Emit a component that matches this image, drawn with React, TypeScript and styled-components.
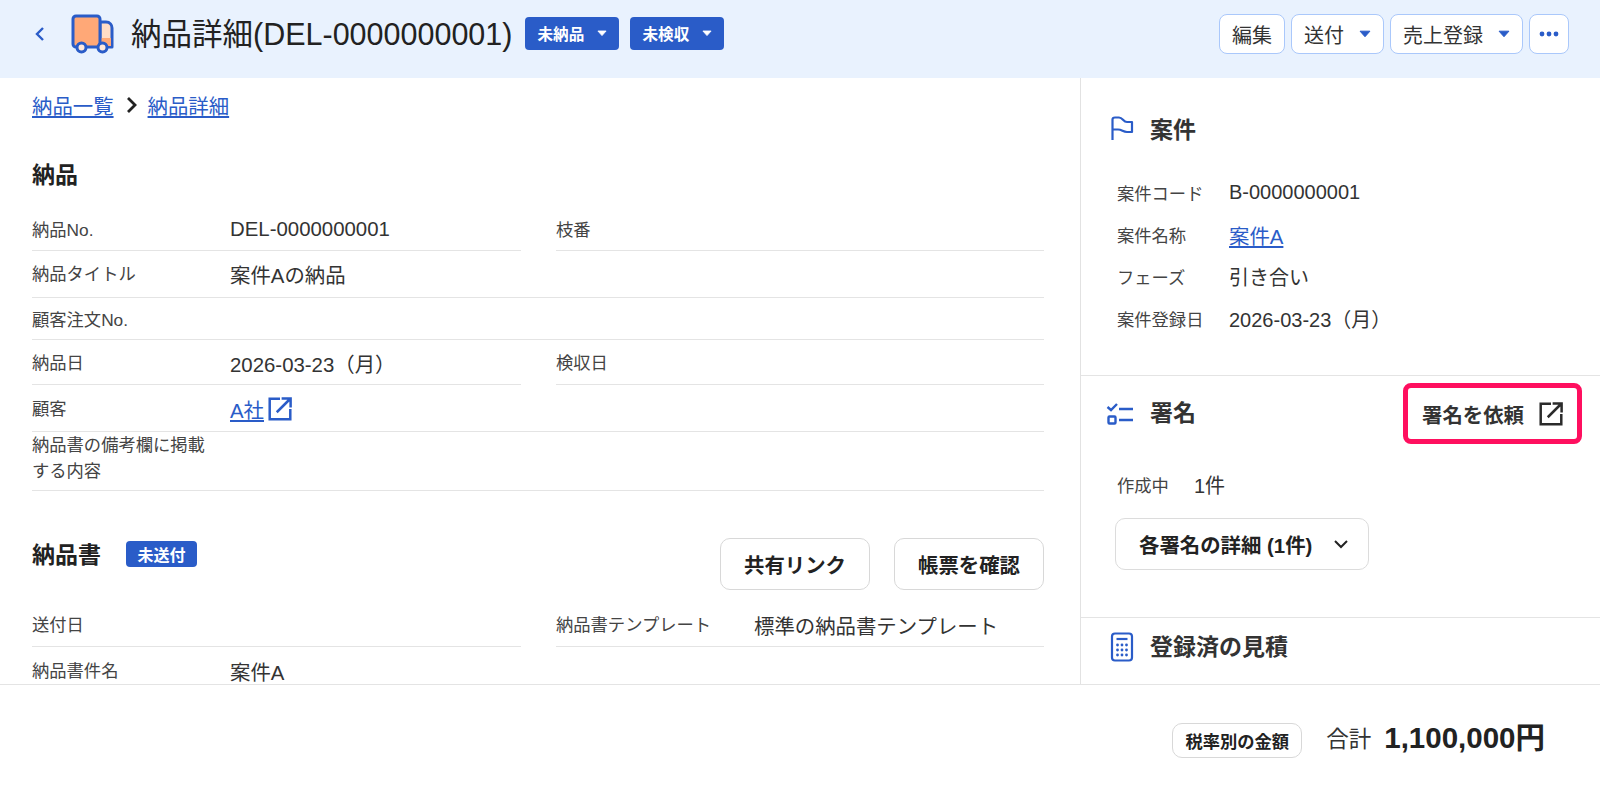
import React from 'react'
import styled, { createGlobalStyle } from 'styled-components'

const Global = createGlobalStyle`
html, body {
  margin: 0;
  padding: 0;
  background: #fff;
}
* {
  box-sizing: border-box;
}
body {
  font-family: "Liberation Sans", "Noto Sans CJK JP", sans-serif;
  color: #2b2b2b;
}
`

const Caret: React.FC<{ color?: string; size?: number }> = ({ color = '#2a5cc8', size = 12 }) => (
  <svg width={size} height={size * 0.66} viewBox="0 0 12 8">
    <path d="M1 1.2h10L6 6.8z" fill={color} stroke={color} strokeWidth="1" strokeLinejoin="round" />
  </svg>
)

const Truck = () => (
  <svg width="44" height="40" viewBox="0 0 44 40">
    <path d="M30 8h6c4 0 6 3 6 6v19H30z" fill="#ffdcc6" stroke="#2a5cc8" strokeWidth="3" strokeLinejoin="round" />
    <path d="M31 24h10v8H31z" fill="#ffa877" />
    <rect x="3" y="2" width="27" height="31" rx="3" fill="#ffa877" stroke="#2a5cc8" strokeWidth="3" />
    <circle cx="11.5" cy="33.5" r="4.5" fill="#ffe9dc" stroke="#2a5cc8" strokeWidth="3" />
    <circle cx="32.5" cy="33.5" r="4.5" fill="#ffe9dc" stroke="#2a5cc8" strokeWidth="3" />
  </svg>
)

const External: React.FC<{ color: string }> = ({ color }) => (
  <svg width="26" height="26" viewBox="0 0 24 24" fill="none" stroke={color} strokeWidth="2.3">
    <path d="M12 2.5H2.5v19h19V12" />
    <path d="M9 15 21 3M13.5 2.2h8.3v8.3" />
  </svg>
)

const Flag = () => (
  <svg width="26" height="28" viewBox="0 0 26 28" fill="none" stroke="#2a5cc8" strokeWidth="2.2" strokeLinejoin="round">
    <path d="M3.5 26V5.5C3.5 4.5 4.5 3.5 6 3.5H10C14 3.5 14 8 18 8H23V18H18C14 18 13 15.5 9 15.5H3.5" />
  </svg>
)

const Checks = () => (
  <ChecksSvg width="28" height="24" viewBox="0 0 28 24" fill="none" stroke="#2a5cc8" strokeWidth="2.4">
    <path d="M1.5 4l3.5 3 6-6M13 6h14M13 17h14" />
    <rect x="2.5" y="13.5" width="7" height="7" rx="1" />
  </ChecksSvg>
)

const Calculator = () => (
  <CalcSvg width="24" height="30" viewBox="0 0 24 30" fill="none" stroke="#2a5cc8" strokeWidth="2.2">
    <rect x="2" y="1.5" width="20" height="27" rx="3" />
    <path d="M6.5 7h11" />
    <g fill="#2a5cc8" stroke="none">
      <circle cx="7.5" cy="13" r="1.4" />
      <circle cx="12" cy="13" r="1.4" />
      <circle cx="16.5" cy="13" r="1.4" />
      <circle cx="7.5" cy="18" r="1.4" />
      <circle cx="12" cy="18" r="1.4" />
      <circle cx="16.5" cy="18" r="1.4" />
      <circle cx="7.5" cy="23" r="1.4" />
      <circle cx="12" cy="23" r="1.4" />
      <circle cx="16.5" cy="23" r="1.4" />
    </g>
  </CalcSvg>
)

const Field: React.FC<{ label: string; children?: React.ReactNode }> = ({ label, children }) => (
  <Cell>
    <Label>{label}</Label>
    <Value>{children}</Value>
  </Cell>
)

const Side: React.FC<{ label: string; children: React.ReactNode }> = ({ label, children }) => (
  <SideRow>
    <SideLabel>{label}</SideLabel>
    <SideValue>{children}</SideValue>
  </SideRow>
)

export default function App() {
  return (
    <Page>
      <Global />
      <Header>
        <HeaderLeft>
          <Back>
            <svg width="12" height="16" viewBox="0 0 12 16" fill="none" stroke="#2a5cc8" strokeWidth="2.4">
              <path d="M9 2 3 8l6 6" />
            </svg>
          </Back>
          <Truck />
          <PageTitle>納品詳細(DEL-0000000001)</PageTitle>
          <Status>未納品<Caret color="#fff" size={10} /></Status>
          <Status>未検収<Caret color="#fff" size={10} /></Status>
        </HeaderLeft>
        <HeaderRight>
          <HeadButton>編集</HeadButton>
          <HeadButton>送付<Caret /></HeadButton>
          <HeadButton>売上登録<Caret /></HeadButton>
          <MoreButton>
            <svg width="20" height="6" viewBox="0 0 20 6" fill="#2a5cc8">
              <circle cx="3" cy="3" r="2.4" />
              <circle cx="10" cy="3" r="2.4" />
              <circle cx="17" cy="3" r="2.4" />
            </svg>
          </MoreButton>
        </HeaderRight>
      </Header>
      <Body>
        <Main>
          <Crumbs>
            <Link>納品一覧</Link>
            <svg width="14" height="18" viewBox="0 0 14 18" fill="none" stroke="#222" strokeWidth="2.8">
              <path d="M4 2l7 7-7 7" />
            </svg>
            <Link>納品詳細</Link>
          </Crumbs>
          <SectionTitle>納品</SectionTitle>
          <Row $h={46} $top={4}>
            <Field label="納品No.">DEL-0000000001</Field>
            <Field label="枝番" />
          </Row>
          <Row $h={47} $full>
            <Field label="納品タイトル">案件Aの納品</Field>
          </Row>
          <Row $h={42} $full $top={2}>
            <Field label="顧客注文No." />
          </Row>
          <Row $h={45} $top={2}>
            <Field label="納品日">2026-03-23（月）</Field>
            <Field label="検収日" />
          </Row>
          <Row $h={47} $full $top={2}>
            <Field label="顧客">
              <ValueLink><Link>A社</Link><External color="#2a5cc8" /></ValueLink>
            </Field>
          </Row>
          <Row $h={59} $full>
            <NoteCell>
              <Label>納品書の備考欄に掲載する内容</Label>
            </NoteCell>
          </Row>
          <InvoiceHead>
            <InvoiceTitle>
              <SectionName>納品書</SectionName>
              <Tag>未送付</Tag>
            </InvoiceTitle>
            <InvoiceActions>
              <OutlineButton>共有リンク</OutlineButton>
              <OutlineButton>帳票を確認</OutlineButton>
            </InvoiceActions>
          </InvoiceHead>
          <Row $h={56} $top={12}>
            <Field label="送付日" />
            <Field label="納品書テンプレート">標準の納品書テンプレート</Field>
          </Row>
          <Row $h={46} $top={2}>
            <Field label="納品書件名">案件A</Field>
            <Cell />
          </Row>
        </Main>
        <Aside>
          <Panel $h={298}>
            <PanelHead>
              <PanelIcon><Flag /></PanelIcon>
              <PanelTitle>案件</PanelTitle>
            </PanelHead>
            <SideList>
              <Side label="案件コード">B-0000000001</Side>
              <Side label="案件名称"><Link>案件A</Link></Side>
              <Side label="フェーズ">引き合い</Side>
              <Side label="案件登録日">2026-03-23（月）</Side>
            </SideList>
          </Panel>
          <Panel $h={242}>
            <SignHead>
              <PanelHead>
                <PanelIcon><Checks /></PanelIcon>
                <PanelTitle>署名</PanelTitle>
              </PanelHead>
              <RequestButton>
                署名を依頼
                <External color="#2b2b2b" />
              </RequestButton>
            </SignHead>
            <Count>
              <SideLabel>作成中</SideLabel>
              <SideValue>1件</SideValue>
            </Count>
            <DetailButton>
              各署名の詳細 (1件)
              <svg width="16" height="10" viewBox="0 0 16 10" fill="none" stroke="#222" strokeWidth="2">
                <path d="M2 2l6 6 6-6" />
              </svg>
            </DetailButton>
          </Panel>
          <EstimatePanel>
            <PanelIcon><Calculator /></PanelIcon>
            <PanelTitle>登録済の見積</PanelTitle>
          </EstimatePanel>
        </Aside>
      </Body>
      <Footer>
        <TaxButton>税率別の金額</TaxButton>
        <TotalLabel>合計</TotalLabel>
        <TotalValue>1,100,000円</TotalValue>
      </Footer>
    </Page>
  )
}

const Page = styled.div`
width:1600px;
height:786px;
display:flex;
flex-direction:column;
overflow:hidden;
`
const Header = styled.header`
height:78px;
background:#e9f2fe;
display:flex;
align-items:center;
justify-content:space-between;
padding:0 31px 10px 34px;
flex:none;
`
const HeaderLeft = styled.div`
display:flex;
align-items:center;
`
const Back = styled.span`
display:flex;
width:36px;
`
const PageTitle = styled.h1`
font-size:30.5px;
font-weight:400;
margin:0 13px 4px 17px;
color:#222;
white-space:nowrap;
`
const Status = styled.span`
height:33px;
width:94px;
margin:0 11px 2px 0;
padding:0 12px;
border-radius:4px;
background:#2a5cc8;
color:#fff;
font-size:15.6px;
font-weight:700;
display:flex;
align-items:center;
justify-content:space-between;
`
const HeaderRight = styled.div`
display:flex;
gap:6px;
`
const HeadButton = styled.button`
height:40px;
padding:0 12px;
gap:15px;
background:#fff;
border:1.5px solid #aac8fb;
border-radius:8px;
color:#333;
font:inherit;
font-size:20px;
display:flex;
align-items:center;
`
const MoreButton = styled(HeadButton)`
width:40px;
padding:0;
justify-content:center;
`
const Body = styled.div`
flex:1;
min-height:0;
display:flex;
`
const Main = styled.main`
width:1081px;
flex:none;
padding:0 36px 0 32px;
border-right:1px solid #e2e2e2;
overflow:hidden;
`
const Crumbs = styled.nav`
height:54px;
display:flex;
align-items:center;
gap:10px;
`
const Link = styled.a`
color:#2a5cc8;
text-decoration:underline;
font-size:20.4px;
`
const SectionTitle = styled.h2`
font-size:23px;
line-height:32px;
font-weight:700;
margin:0;
height:73px;
padding-top:27px;
color:#222;
`
const Row = styled.div<{ $h: number; $full?: boolean; $top?: number }>`
height:${p => p.$h}px;
padding-top:${p => p.$top || 0}px;
display:grid;
grid-template-columns:${p => p.$full ? '1fr' : '489px 488px'};
column-gap:35px;
`
const Cell = styled.div`
display:flex;
align-items:center;
border-bottom:1px solid #e4e4e4;
`
const Label = styled.span`
width:198px;
padding-right:15px;
flex:none;
font-size:17.3px;
line-height:26px;
color:#444;
`
const NoteCell = styled(Cell)`
padding-bottom:6px;
`
const Value = styled.span`
font-size:20.4px;
color:#333;
`
const ValueLink = styled.span`
display:flex;
align-items:center;
gap:3px;
`
const InvoiceHead = styled.div`
height:100px;
padding-top:47px;
display:flex;
align-items:flex-start;
justify-content:space-between;
`
const InvoiceTitle = styled.div`
display:flex;
align-items:center;
gap:25px;
height:32px;
`
const SectionName = styled.h2`
font-size:23px;
font-weight:700;
margin:0 0 3px;
color:#222;
`
const Tag = styled.span`
height:26px;
width:71px;
border-radius:4px;
background:#2a5cc8;
color:#fff;
font-size:16px;
font-weight:700;
display:flex;
align-items:center;
justify-content:center;
`
const InvoiceActions = styled.div`
display:flex;
gap:24px;
`
const OutlineButton = styled.button`
height:52px;
width:150px;
background:#fff;
border:1px solid #d8d8d8;
border-radius:10px;
color:#222;
font:inherit;
font-size:20.4px;
font-weight:700;
padding:0;
`
const Aside = styled.aside`
flex:1;
min-width:0;
overflow:hidden;
`
const Panel = styled.section<{ $h: number }>`
height:${p => p.$h}px;
border-bottom:1px solid #e4e4e4;
padding:0 18px 0 28px;
`
const PanelHead = styled.div`
display:flex;
align-items:center;
gap:15px;
height:99px;
`
const PanelIcon = styled.span`
display:flex;
width:26px;
justify-content:center;
`
const ChecksSvg = styled.svg`
flex:none;
margin:8px 0 0 -5px;
`
const CalcSvg = styled.svg`
flex:none;
margin-top:4px;
`
const PanelTitle = styled.h3`
margin:0;
font-size:23px;
font-weight:700;
color:#333;
`
const SideList = styled.div`
padding:0 8px;
margin-top:-5px;
`
const SideRow = styled.div`
display:flex;
align-items:center;
height:41.8px;
`
const SideLabel = styled.span`
width:112px;
font-size:17.3px;
color:#444;
`
const SideValue = styled.span`
font-size:20px;
color:#333;
`
const SignHead = styled.div`
display:flex;
align-items:flex-start;
justify-content:space-between;
height:93px;
& > ${PanelHead} {
  height:70px;
}
`
const RequestButton = styled.div`
margin-top:7px;
width:179px;
height:61px;
border:5px solid #ff0f5f;
border-radius:8px;
display:flex;
align-items:center;
justify-content:space-between;
padding:0 13px 0 14px;
font-size:20.4px;
font-weight:700;
color:#333;
`
const Count = styled.div`
display:flex;
align-items:center;
padding-left:8px;
height:30px;
& > ${SideLabel} {
  width:77px;
}
`
const DetailButton = styled.button`
margin:19px 0 0 6px;
width:254px;
height:52px;
background:#fff;
border:1px solid #dcdcdc;
border-radius:10px;
color:#222;
font:inherit;
font-size:20.4px;
font-weight:700;
display:flex;
align-items:center;
justify-content:space-between;
padding:0 19px 0 23px;
`
const EstimatePanel = styled.section`
display:flex;
align-items:center;
gap:15px;
height:54px;
padding:0 28px;
`
const Footer = styled.footer`
height:102px;
flex:none;
border-top:1px solid #e4e4e4;
display:flex;
align-items:center;
justify-content:flex-end;
padding:9px 55px 0 0;
`
const TaxButton = styled.button`
height:35px;
width:130px;
background:#fff;
border:1px solid #d8d8d8;
border-radius:10px;
color:#222;
font:inherit;
font-size:17.3px;
font-weight:700;
padding:0;
margin-right:24px;
`
const TotalLabel = styled.span`
font-size:22.5px;
color:#333;
margin:0 13px 6px 0;
`
const TotalValue = styled.span`
font-size:29.5px;
font-weight:700;
color:#222;
margin-bottom:10px;
`
